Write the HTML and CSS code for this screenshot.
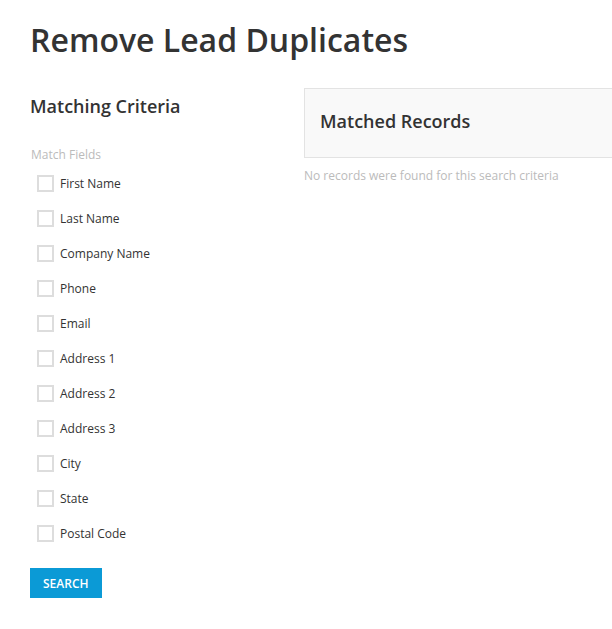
FILE: index.html
```html
<!DOCTYPE html>
<html>
<head>
<meta charset="utf-8">
<link rel="stylesheet" href="styles.css">
</head>
<body>
<div class="page">
  <h1 class="title">Remove Lead Duplicates</h1>
  <div class="columns">
    <div class="criteria">
      <h2 class="section-title">Matching Criteria</h2>
      <div class="field-label">Match Fields</div>
      <ul class="fields">
        <li class="field"><span class="box"></span><span>First Name</span></li>
        <li class="field"><span class="box"></span><span>Last Name</span></li>
        <li class="field"><span class="box"></span><span>Company Name</span></li>
        <li class="field"><span class="box"></span><span>Phone</span></li>
        <li class="field"><span class="box"></span><span>Email</span></li>
        <li class="field"><span class="box"></span><span>Address 1</span></li>
        <li class="field"><span class="box"></span><span>Address 2</span></li>
        <li class="field"><span class="box"></span><span>Address 3</span></li>
        <li class="field"><span class="box"></span><span>City</span></li>
        <li class="field"><span class="box"></span><span>State</span></li>
        <li class="field"><span class="box"></span><span>Postal Code</span></li>
      </ul>
      <button class="search">SEARCH</button>
    </div>
    <div class="results">
      <div class="panel"><h2 class="panel-title">Matched Records</h2></div>
      <div class="empty">No records were found for this search criteria</div>
    </div>
  </div>
</div>
</body>
</html>
```
FILE: styles.css
```css
html, body { margin: 0; padding: 0; background: #fff; }
body { font-family: "Open Sans", "Liberation Sans", sans-serif; color: #333; }
.page { padding: 18px 0 0 30px; overflow: hidden; }
.title { margin: 0; font-size: 32px; font-weight: 600; line-height: 44px; color: #333; }
.columns { display: flex; margin-top: 26px; }
.criteria { width: 274px; flex: none; }
.section-title { margin: 6px 0 0 0; font-size: 18px; font-weight: 600; line-height: 24px; color: #333; }
.field-label { margin: 29px 0 0 1px; font-size: 12px; line-height: 16px; color: #bbb; }
.fields { list-style: none; margin: 3px 0 0 7px; padding: 0; }
.field { display: flex; align-items: center; height: 35px; font-size: 12px; color: #333; }
.box { width: 13px; height: 13px; border: 2px solid #ddd; margin-right: 6px; background: #fff; }
.search { margin-top: 17px; height: 30px; padding: 0 13px; border: none; background: #0b9ad6; color: #fff; font-family: "Open Sans", sans-serif; font-size: 12px; font-weight: 600; }
.results { flex: 1; min-width: 0; }
.panel { background: #f9f9f9; border: 1px solid #e3e3e3; border-right: none; height: 68px; display: flex; align-items: center; padding-left: 15px; padding-bottom: 4px; box-sizing: border-box; height: 70px; }
.panel-title { margin: 0; font-size: 18px; font-weight: 600; color: #333; }
.empty { margin-top: 9px; font-size: 12px; color: #bbb; white-space: nowrap; }
```
